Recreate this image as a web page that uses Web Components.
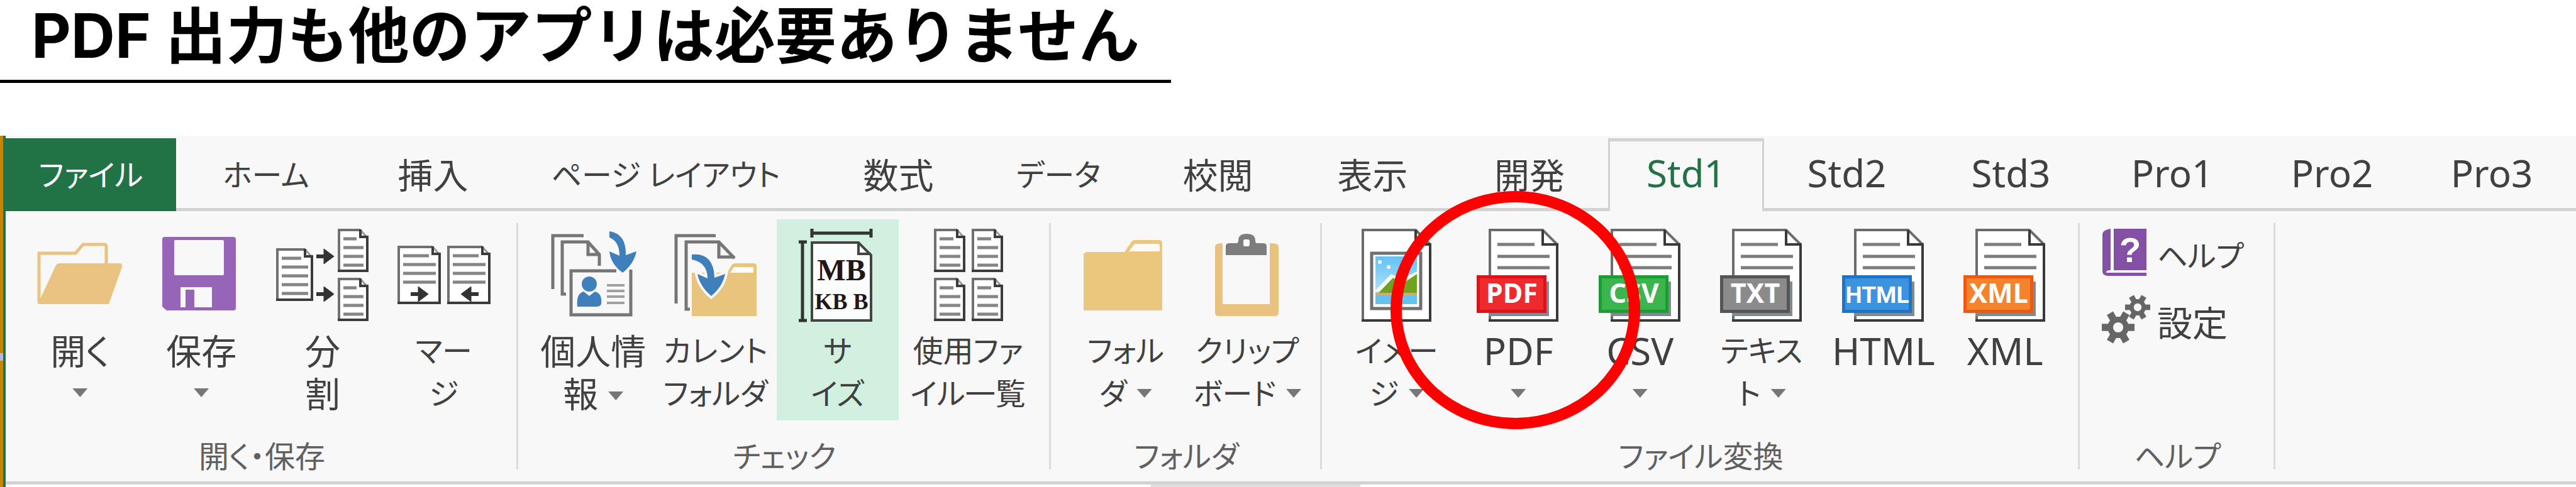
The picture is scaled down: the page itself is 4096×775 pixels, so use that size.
<!DOCTYPE html>
<html lang="ja">
<head>
<meta charset="utf-8">
<title>PDF 出力</title>
<style>
    body {
        margin: 0;
        background: #fff;
        color: #404040;
        font-family: "Noto Sans", "Noto Sans CJK JP", sans-serif;
        font-feature-settings: "palt";
        --line: #d2d2d2;
        --surface: #f8f8f8;
        --green: #217346;
    }
</style>
</head>
<body>

<page-title>PDF 出力も他のアプリは必要ありません</page-title>

<app-ribbon>
    <ribbon-tab slot="tabs" type="file" text="kana">ファイル</ribbon-tab>
    <ribbon-tab slot="tabs" text="kana">ホーム</ribbon-tab>
    <ribbon-tab slot="tabs">挿入</ribbon-tab>
    <ribbon-tab slot="tabs" text="kana">ページ レイアウト</ribbon-tab>
    <ribbon-tab slot="tabs">数式</ribbon-tab>
    <ribbon-tab slot="tabs" text="kana">データ</ribbon-tab>
    <ribbon-tab slot="tabs">校閲</ribbon-tab>
    <ribbon-tab slot="tabs">表示</ribbon-tab>
    <ribbon-tab slot="tabs">開発</ribbon-tab>
    <ribbon-tab slot="tabs" type="active" text="latin">Std1</ribbon-tab>
    <ribbon-tab slot="tabs" text="latin">Std2</ribbon-tab>
    <ribbon-tab slot="tabs" text="latin">Std3</ribbon-tab>
    <ribbon-tab slot="tabs" text="latin">Pro1</ribbon-tab>
    <ribbon-tab slot="tabs" text="latin">Pro2</ribbon-tab>
    <ribbon-tab slot="tabs" text="latin">Pro3</ribbon-tab>

    <ribbon-group label="開く・保存">
        <ribbon-button icon="open" menu>開く<br></ribbon-button>
        <ribbon-button icon="save" menu>保存<br></ribbon-button>
        <ribbon-button icon="split">分<br>割</ribbon-button>
        <ribbon-button icon="merge" text="kana">マー<br>ジ</ribbon-button>
    </ribbon-group>
    <ribbon-group label="チェック">
        <ribbon-button icon="person" menu>個人情<br>報</ribbon-button>
        <ribbon-button icon="current" text="kana">カレント<br>フォルダ</ribbon-button>
        <ribbon-button icon="size" text="kana" selected>サ<br>イズ</ribbon-button>
        <ribbon-button icon="files" text="kana" wide>使用ファ<br>イル一覧</ribbon-button>
    </ribbon-group>
    <ribbon-group label="フォルダ">
        <ribbon-button icon="folder" text="kana" menu>フォル<br>ダ</ribbon-button>
        <ribbon-button icon="clipboard" text="kana" menu>クリップ<br>ボード</ribbon-button>
    </ribbon-group>
    <ribbon-group label="ファイル変換">
        <ribbon-button icon="image" text="kana" menu>イメー<br>ジ</ribbon-button>
        <ribbon-button icon="pdf" text="latin" menu>PDF<br><callout-ring slot="mark"></callout-ring></ribbon-button>
        <ribbon-button icon="csv" text="latin" menu>CSV<br></ribbon-button>
        <ribbon-button icon="txt" text="kana" menu>テキス<br>ト</ribbon-button>
        <ribbon-button icon="html" text="latin">HTML</ribbon-button>
        <ribbon-button icon="xml" text="latin">XML</ribbon-button>
    </ribbon-group>
    <ribbon-group label="ヘルプ" stacked>
        <ribbon-button icon="help" text="kana" inline>ヘルプ</ribbon-button>
        <ribbon-button icon="settings" inline>設定</ribbon-button>
    </ribbon-group>
</app-ribbon>

<script>
// Tamaños de letra comunes a pestañas y botones
const TEXT_SIZES = `
    :host { font-size: 56px; }
    :host([text="kana"]) { font-size: 48px; }
    :host([text="latin"]) { font-size: 60px; }
`;

// Hoja pequeña con esquina doblada y líneas de texto
function sheet(x, y, w, h, rows) {
    const r = x + w, b = y + h, f = 13;
    let lines = '';
    for (let i = 0; i < rows; i++) {
        const ly = y + 16 + i * 14;
        lines += `<path d="M${x + 9} ${ly}H${i === 0 ? r - 19 : r - 8}" stroke="#858585" stroke-width="5"/>`;
    }
    return `
        <path d="M${x + 2} ${b - 2}V${y + 2}H${r - f}L${r - 2} ${y + f}V${b - 2}Z" fill="#fff"/>
        <path d="M${x + 2} ${b}V${y + 2}H${r - f}" fill="none" stroke="#707070" stroke-width="4"/>
        <path d="M${r - f} ${y + 2}L${r - 3} ${y + f}" stroke="#999" stroke-width="3"/>
        <path d="M${r - f} ${y + 1}V${y + f}H${r - 2}V${b - 2}H${x}" fill="none" stroke="#3c3c3c" stroke-width="4"/>
        ${lines}`;
}

// Hoja grande de los formatos de archivo
function page(x) {
    return `
        <path d="M${x + 2} 2H${x + 86}L${x + 109} 26V146H${x + 2}Z" fill="#fff"/>
        <path d="M${x + 2} 148V2H${x + 86}L${x + 109} 25" fill="none" stroke="#6c6c6c" stroke-width="4"/>
        <path d="M${x + 86} 2V25H${x + 109}V146H${x}" fill="none" stroke="#3a3a3a" stroke-width="4"/>`;
}

function format(name, edge, fill, font, size) {
    return `
        ${page(28)}
        <path d="M42 25H101M42 44H125M42 62H125" stroke="#7c7c7c" stroke-width="5"/>
        <path d="M28 84H124V139H28Z" fill="#7f8b8f"/>
        <rect x="9" y="74" width="111" height="60" fill="${edge}"/>
        <rect x="14" y="79" width="101" height="50" fill="${fill}"/>
        <text x="65" y="118" text-anchor="middle" font-family="${font}" font-weight="700" font-size="${size}" fill="#fff">${name}</text>`;
}

function arrow(x, y, dir) {
    return `<path d="M${x} ${y}h${12 * dir}v-12l${16 * dir} 12l${-16 * dir} 12v-12" fill="#333" stroke="#333" stroke-width="1"/>
        <path d="M${x} ${y}h${16 * dir}" stroke="#333" stroke-width="6"/>`;
}

// Engranaje de seis dientes
function gear(cx, cy, r) {
    let teeth = '';
    for (let a = 0; a < 360; a += 60) {
        teeth += `<rect x="${cx - r * 0.22}" y="${cy - r}" width="${r * 0.44}" height="${r * 0.6}" transform="rotate(${a + 30} ${cx} ${cy})"/>`;
    }
    return `<g fill="#666">${teeth}</g><circle cx="${cx}" cy="${cy}" r="${r * 0.48}" fill="#f8f8f8" stroke="#666" stroke-width="${r * 0.34}"/>`;
}

const ICONS = {
    open: `
        <path d="M10 118V39H68L80 25H114Q117 25 117 29V57" fill="none" stroke="#eac282" stroke-width="5"/>
        <path d="M43 55H138Q143 55 142 61L121 120H8L36 60Q38 55 43 55Z" fill="#eac282"/>`,
    save: `
        <path d="M17 13H126Q130 13 130 17V126Q130 130 126 130H20L13 124V17Q13 13 17 13Z" fill="#9665b8"/>
        <rect x="32" y="18" width="79" height="56" rx="2" fill="#f8f8f8"/>
        <rect x="42" y="93" width="50" height="32" fill="#f8f8f8"/>
        <path d="M50 125V97H64V125Z" fill="#9665b8"/>`,
    split: sheet(1, 31, 59, 84, 5) + sheet(99, 0, 49, 69, 4) + sheet(99, 78, 49, 69, 4)
        + arrow(65, 44, 1) + arrow(65, 104, 1),
    merge: sheet(1, 27, 69, 93, 4) + sheet(80, 27, 69, 93, 4) + arrow(22, 104, 1) + arrow(130, 104, -1),
    person: `
        <path d="M11 96V11H60M32 104H26V21H67L85 41V59M67 21V41H85" fill="none" stroke="#767676" stroke-width="5"/>
        <path d="M112 67H40V137H135V65" fill="none" stroke="#767676" stroke-width="5"/>
        <path d="M101 4Q128 8 127 42L144 36Q140 56 122 70Q103 56 101 36L117 43Q117 20 101 14Z" fill="#3f7fbc"/>
        <ellipse cx="69" cy="88" rx="12" ry="12" fill="#3f7fbc"/>
        <path d="M50 124Q48 103 60 100L69 107L78 100Q90 103 88 120Q86 124 80 124Z" fill="#3f7fbc"/>
        <path d="M97 90H125M97 99H125M97 108H125M97 118H125" stroke="#a0a0a0" stroke-width="4"/>`,
    current: `
        <path d="M12 119V11H75M34 128H28V21H80L105 47M80 21V45H105" fill="none" stroke="#767676" stroke-width="5"/>
        <path d="M37 139V70H93L101 57Q103 55 107 55H136Q140 55 140 59V139Z" fill="#e9c47c"/>
        <path d="M98 70L104 61H135V70Z" fill="#fff"/>
        <path d="M37 41Q72 38 73 78L90 72Q86 92 68 107Q50 92 46 72L62 79Q62 54 37 49Z" fill="#3f7fbc" stroke="#f8f8f8" stroke-width="8" paint-order="stroke"/>`,
    size: `
        <path d="M34 7H128M34 0V14M128 0V14M19 21V146M13 21H26M13 146H26" stroke="#333" stroke-width="5"/>
        <path d="M34 146V22H108L128 42V146Z" fill="#fbfdfc" stroke="#444" stroke-width="4"/>
        <path d="M108 22V40H128" fill="none" stroke="#444" stroke-width="4"/>
        <text x="81" y="82" text-anchor="middle" font-family="Liberation Serif" font-weight="700" font-size="48" fill="#221714">MB</text>
        <text x="81" y="128" text-anchor="middle" font-family="Liberation Serif" font-weight="700" font-size="36" fill="#221714">KB B</text>`,
    files: sheet(21, 0, 50, 69, 4) + sheet(81, 0, 50, 69, 4) + sheet(21, 78, 50, 69, 4) + sheet(81, 78, 50, 69, 4),
    folder: `
        <path d="M8 130V40L12 37H73L84 21Q86 18 90 18H128Q133 18 133 23V130Z" fill="#ebc67d"/>
        <path d="M80 36L89 24H126Q129 24 129 28V36Z" fill="#fcfaf5"/>`,
    clipboard: `
        <path d="M24 28Q24 23 36 23V120H111V23Q125 23 125 28V133Q125 139 119 139H30Q24 139 24 133Z" fill="#eac27f"/>
        <path d="M41 42V28Q41 23 47 23H58Q61 23 61 19Q61 8 74 8Q88 8 88 19Q88 23 91 23H100Q106 23 106 28V42Z" fill="#7d7d7d"/>
        <rect x="69" y="17" width="10" height="11" rx="3" fill="#fff"/>`,
    image: `
        <defs><linearGradient id="sky" x2="0" y2="1"><stop stop-color="#62c2f5"/><stop offset="1" stop-color="#c6ecfb"/></linearGradient></defs>
        ${page(19)}
        <rect x="35" y="39" width="78" height="88" fill="#fff" stroke="#707070" stroke-width="5"/>
        <rect x="41" y="44" width="66" height="76" fill="url(#sky)"/>
        <path d="M41 98L66 72L82 80L107 68V100H41Z" fill="#f5fbf2"/>
        <path d="M46 102L69 78L83 88L107 72V103Z" fill="#6da321"/>
        <rect x="41" y="102" width="66" height="4" fill="#d9a969"/>
        <rect x="41" y="106" width="66" height="14" fill="#65c2ed"/>
        <circle cx="48" cy="53" r="3" fill="#fff"/><circle cx="62" cy="61" r="3" fill="#fff"/>`,
    pdf: format('PDF', '#d9151c', '#ee2a2e', 'Noto Sans', 43),
    csv: format('CSV', '#1e9b34', '#3db54d', 'Noto Sans', 43),
    txt: format('TXT', '#555', '#8b8b8b', 'Noto Sans', 43),
    html: format('HTML', '#1d73c4', '#3c94e0', 'Roboto', 37),
    xml: format('XML', '#ec5a12', '#f5832d', 'Noto Sans', 43),
    help: `
        <path d="M0 68V8Q1 2 13 0V66Q5 66 6 70H70V75H8Q0 74 0 68Z" fill="#8450a5"/>
        <rect x="18" y="0" width="52" height="66" fill="#8450a5"/>
        <text x="44" y="53" text-anchor="middle" font-family="Liberation Sans" font-weight="700" font-size="56" fill="#fff">?</text>`,
    settings: gear(25, 51, 26) + gear(56, 19, 20)
};

class PageTitle extends HTMLElement {

    constructor() {
        super();
        this.attachShadow({ mode: "open" });
    }

    connectedCallback() {
        this.shadowRoot.innerHTML = `
        <style>
            :host { display: block; margin-bottom: 84px; }
            h1 {
                box-sizing: border-box;
                width: fit-content;
                margin: 0;
                padding: 0 50px 13px 50px;
                border-bottom: 5px solid #000;
                color: #000;
                font-family: Inter, "Noto Sans CJK JP", sans-serif;
                font-feature-settings: normal;
                font-size: 97px;
                font-weight: 700;
                line-height: 114px;
                white-space: nowrap;
            }
        </style>
        <h1><slot></slot></h1>
    `;
    }
}

class AppRibbon extends HTMLElement {

    constructor() {
        super();
        this.attachShadow({ mode: "open" });
    }

    connectedCallback() {
        this.shadowRoot.innerHTML = `
        <style>
            :host { display: flex; background: var(--surface); }
            .edge {
                flex: none;
                width: 5px;
                border-right: 4px solid var(--green);
                background: linear-gradient(#b9b4e0, #b9b4e0) 0 346px / 5px 12px no-repeat #c58608;
            }
            .main { flex: 1; min-width: 0; }
            .tabs {
                display: grid;
                grid-template-columns: 271fr 286fr 245fr 495fr 245fr 264fr 243fr 249fr 250fr 248fr 263fr 259fr 254fr 254fr 254fr 7fr;
                padding-top: 4px;
                box-shadow: inset 0 -5px var(--line);
            }
            .groups {
                display: grid;
                grid-template-columns: 815fr 847fr 431fr 1205fr 311fr 478fr;
                border-bottom: 5px solid var(--line);
            }
            .below {
                display: grid;
                grid-template-columns: 1821fr 333fr 1933fr;
                height: 4px;
                background: #fdfdfd;
            }
            .below div { grid-column: 2; background: #dedede; }
        </style>
        <div class="edge"></div>
        <div class="main">
            <nav class="tabs"><slot name="tabs"></slot></nav>
            <div class="groups"><slot></slot></div>
            <div class="below"><div></div></div>
        </div>
    `;
    }
}

class RibbonTab extends HTMLElement {

    constructor() {
        super();
        this.attachShadow({ mode: "open" });
    }

    connectedCallback() {
        this.shadowRoot.innerHTML = `
        <style>
            ${TEXT_SIZES}
            :host { display: block; min-width: 0; height: 116px; }
            button {
                display: block;
                box-sizing: border-box;
                width: 100%;
                height: 100%;
                margin: 0;
                padding: 0 0 6px;
                border: 0;
                background: none;
                color: inherit;
                font: inherit;
                font-feature-settings: inherit;
                white-space: nowrap;
            }
            :host([type="file"]) button { background: var(--green); color: #fff; }
            :host([type="active"]) button {
                padding-bottom: 11px;
                border: solid var(--line);
                border-width: 5px 3px 0;
                background: var(--surface);
                color: var(--green);
            }
        </style>
        <button type="button"><slot></slot></button>
    `;
    }
}

class RibbonGroup extends HTMLElement {

    constructor() {
        super();
        this.attachShadow({ mode: "open" });
    }

    connectedCallback() {
        this.shadowRoot.innerHTML = `
        <style>
            :host {
                display: block;
                min-width: 0;
                padding: 13px 22px 6px;
                background: linear-gradient(#dcdcdc, #dcdcdc) right 19px / 3px calc(100% - 38px) no-repeat;
            }
            .actions { display: flex; height: 320px; }
            :host([stacked]) .actions { flex-direction: column; padding-left: 14px; }
            .label {
                margin-top: 23px;
                color: #606060;
                font-size: 48px;
                line-height: 68px;
                text-align: center;
                white-space: nowrap;
            }
        </style>
        <div class="actions"><slot></slot></div>
        <div class="label">${this.getAttribute('label')}</div>
    `;
    }
}

class RibbonButton extends HTMLElement {

    constructor() {
        super();
        this.attachShadow({ mode: "open" });
    }

    connectedCallback() {
        const inline = this.hasAttribute('inline');
        const box = inline ? '0 0 75 77' : '0 0 150 148';

        // El triángulo solo aparece en los botones con menú
        const caret = this.hasAttribute('menu') ? '<i></i>' : '';

        this.shadowRoot.innerHTML = `
        <style>
            ${TEXT_SIZES}
            :host { display: block; position: relative; flex: 100 1 0; min-width: 0; }
            :host([wide]) { flex-grow: 113; }
            :host([inline]) { flex: none; height: 106px; }
            button {
                display: flex;
                flex-direction: column;
                align-items: center;
                gap: 12px;
                box-sizing: border-box;
                width: 100%;
                height: 100%;
                margin: 0;
                padding: 15px 0 0;
                border: 0;
                background: none;
                color: inherit;
                font: inherit;
                font-feature-settings: inherit;
                line-height: 68px;
            }
            :host([selected]) button { background: #d2f0e0; }
            :host([inline]) button { flex-direction: row; padding: 0; }
            svg { display: block; flex: none; width: 150px; height: 148px; overflow: visible; }
            :host([inline]) svg { width: 75px; height: 77px; }
            span { white-space: nowrap; }
            :host([inline]) span { padding-top: 10px; }
            i {
                display: inline-block;
                width: 24px;
                height: 14px;
                margin-left: 16px;
                background: #777;
                clip-path: polygon(0 0, 100% 0, 50% 100%);
                vertical-align: 11px;
            }
            :host([text="latin"]) i, :host([icon="open"]) i, :host([icon="save"]) i {
                margin-left: 0;
                vertical-align: 16px;
            }
        </style>
        <button type="button">
            <svg viewBox="${box}" aria-hidden="true">${ICONS[this.getAttribute('icon')]}</svg>
            <span><slot></slot>${caret}</span>
        </button>
        <slot name="mark"></slot>
    `;
    }
}

// Círculo rojo que señala un botón de la cinta
class CalloutRing extends HTMLElement {

    constructor() {
        super();
        this.attachShadow({ mode: "open" });
    }

    connectedCallback() {
        this.shadowRoot.innerHTML = `
        <style>
            :host {
                position: absolute;
                z-index: 1;
                top: -45px;
                left: calc(50% - 203px);
                box-sizing: border-box;
                width: 397px;
                height: 379px;
                border: 18px solid #f00;
                border-radius: 50%;
                pointer-events: none;
            }
        </style>
    `;
    }
}

customElements.define("page-title", PageTitle);
customElements.define("app-ribbon", AppRibbon);
customElements.define("ribbon-tab", RibbonTab);
customElements.define("ribbon-group", RibbonGroup);
customElements.define("ribbon-button", RibbonButton);
customElements.define("callout-ring", CalloutRing);
</script>
</body>
</html>
